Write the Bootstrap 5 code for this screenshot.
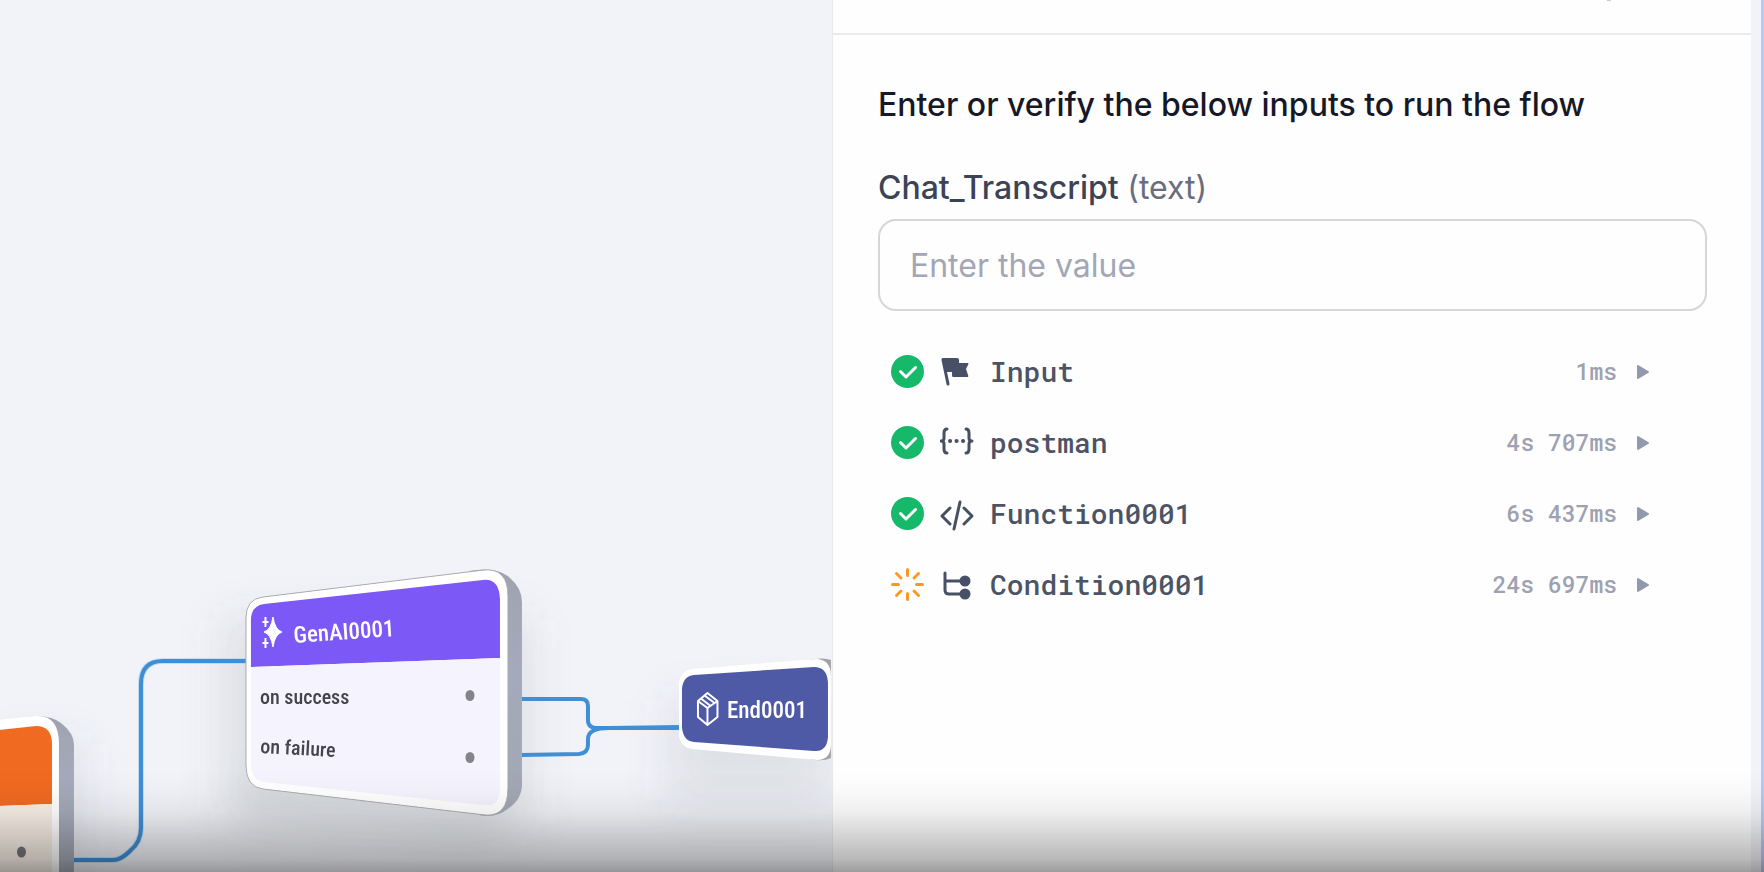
<!DOCTYPE html>
<html lang="en">
<head>
<meta charset="utf-8">
<meta name="viewport" content="width=device-width, initial-scale=1">
<title>Run flow</title>
<link href="https://cdn.jsdelivr.net/npm/bootstrap@5.3.0/dist/css/bootstrap.min.css" rel="stylesheet">
<script src="https://cdn.jsdelivr.net/npm/bootstrap@5.3.0/dist/js/bootstrap.bundle.min.js"></script>
<style>
  body { font-family: Inter, "Liberation Sans", sans-serif; background: #f2f3f8; }
  .flow-canvas { min-width: 0; flex: 1 1 0; }
  .flow-canvas svg { width: 100%; height: 100%; }
  .node-text { font-family: "Roboto Condensed", Roboto, sans-serif; }
  .run-panel { flex: 0 0 52.1%; background: #fefefe; border-left: 1px solid #e9eaee; }
  .panel-top { height: 35px; border-bottom: 2px solid #ebebec; padding-right: 140px; }
  .panel-body { padding: 48px 44px 0 45px; }
  .panel-title { font-size: 32px; line-height: 44px; font-weight: 500; color: #161827; margin-bottom: 39px; }
  .field-label { font-size: 32px; line-height: 44px; color: #3c4354; font-weight: 500; margin-bottom: 9px; }
  .field-label span { color: #6a6d80; font-weight: 400; }
  .value-input { height: 92px; border: 2px solid #d5d6d9; border-radius: 18px; padding: 0 30px; font-size: 32px; background: #fefefe; }
  .value-input::placeholder { color: #a3a6b4; opacity: 1; }
  .run-steps { margin-top: 25px; padding: 0 57px 0 13px; }
  .run-step { height: 71px; font-family: "Roboto Mono", "Liberation Mono", monospace; }
  .step-name { font-size: 28px; color: #4b5365; font-weight: 500; margin-left: 16px; }
  .step-time { font-size: 23px; color: #9da1b1; font-weight: 500; }
  .step-status { margin-right: 16px; }
  .step-toggle { margin-left: 19px; line-height: 0; color: #9399ad; }
  .edge-strip { flex: 0 0 13px; background: #f2f3f8; border-right: 3px solid #b5cafa; }
  .bottom-shade { height: 100px; pointer-events: none; background: linear-gradient(rgba(0,0,0,0), rgba(0,0,0,.02) 20%, rgba(0,0,0,.06) 40%, rgba(0,0,0,.18) 67%, rgba(0,0,0,.27) 87%, rgba(0,0,0,.38)); }
</style>
</head>
<body>
<svg width="0" height="0" class="position-absolute" aria-hidden="true">
  <symbol id="i-check" viewBox="0 0 33 33"><circle cx="16.500" cy="16.500" r="16.500" fill="#16b869"/><path d="M9.500 16.500l5.500 5.500 9.500-9.500" fill="none" stroke="#fff" stroke-width="3" stroke-linecap="round" stroke-linejoin="round"/></symbol>
</svg>
<main class="d-flex vh-100 overflow-hidden">
  <section class="flow-canvas" aria-label="Flow canvas">
    <svg class="d-block" viewBox="0 0 833 872" preserveAspectRatio="xMaxYMax slice">
      <defs>
        <filter id="soft" x="-30%" y="-30%" width="160%" height="160%"><feGaussianBlur stdDeviation="22"/></filter>
        <linearGradient id="side" x1="0" y1="0" x2="0" y2="1"><stop offset="0" stop-color="#9fa3b0"/><stop offset=".4" stop-color="#a5aabb"/><stop offset="1" stop-color="#a2a7b3"/></linearGradient>
      </defs>
      <g filter="url(#soft)" fill="#5c6068">
        <path d="M225 620L530 620V825L225 810Z" opacity=".14"/>
        <path d="M240 785L500 805V840L240 825Z" opacity=".14"/>
        <path d="M0 745H85V880H0Z" opacity=".12"/>
        <path d="M670 700H833V800H670Z" opacity=".12"/>
      </g>
      <path d="M74 860H114Q122 860 131 851Q142 842 142 828V684Q142 661 164 661H248" fill="none" stroke="#a9d2f4" stroke-width="6" opacity=".6"/>
      <g fill="none" stroke="#3f8fd6" stroke-width="4">
        <path d="M74 860H114Q122 860 131 851Q142 842 142 828V684Q142 661 164 661H248"/>
        <path d="M522 699H582Q589 699 589 706V720Q589 728 598 728H682"/>
        <path d="M522 755L580 754Q589 753 589 745V739Q589 728 610 728L682 727"/>
      </g>

      <!-- orange node, running off the left edge -->
      <path d="M30 717Q50 714 62 723Q75 733 75 745V872H30Z" fill="url(#side)"/>
      <path d="M0 720L36 716Q60 714 60 744V872H0Z" fill="#fff"/>
      <path d="M0 730L37 726Q53 726 53 744V804L0 806Z" fill="#f06a22"/>
      <path d="M0 806L53 804V872H0Z" fill="#f8efe6"/>
      <ellipse cx="22.500" cy="852" rx="4.500" ry="5.500" fill="#77737a"/>

      <!-- GenAI node -->
      <path d="M470 571Q497 566 510 577Q523 588 523 602V784Q523 799 510 808Q497 819 480 815Z" fill="url(#side)"/>
      <path d="M264 597L485 570Q509 568 509 596V788Q509 817 486 815L264 789Q247 787 247 765V618Q247 599 264 597Z" fill="#fff" stroke="#a8aab0" stroke-width="1"/>
      <path d="M264 598L485 571Q508 569 508 596V788Q508 816 486 814L264 788Q248 786 248 765V618Q248 600 264 598Z" fill="#fff"/>
      <path d="M265 604L484 580Q500 578 501 599V658L252 667V620Q252 606 265 604Z" fill="#7c59f6"/>
      <path d="M252 667L501 658V790Q500 808 484 805L265 782Q252 780 252 764Z" fill="#f5f3fe"/>
      <path d="M274 617Q276 630 283 632Q276 634 274 647Q272 634 265 632Q272 630 274 617Z" fill="#fff" stroke="#fff" stroke-width="1"/>
      <path d="M266.500 617v10M263.500 622h6M266.500 638v10M263.500 643h6" stroke="#fff" stroke-width="2"/>
      <g class="node-text">
        <text x="295" y="643" font-size="23" font-weight="500" fill="#fff" transform="rotate(-4 295 643)">GenAI0001</text>
        <text x="261" y="704" font-size="20" font-weight="500" fill="#44434f">on success</text>
        <text x="261" y="753" font-size="20" font-weight="500" fill="#44434f" transform="rotate(3 261 753)">on failure</text>
      </g>
      <ellipse cx="471" cy="695.500" rx="4.500" ry="5.500" fill="#83828f"/>
      <ellipse cx="471" cy="757.500" rx="4.500" ry="5.500" fill="#83828f"/>

      <!-- End node -->
      <path d="M810 660Q824 657 832 660V758Q824 762 810 759Z" fill="#a1a2a8"/>
      <path d="M693 669L818 659Q832 660 832 676V744Q832 760 818 760L693 749Q681 747 680 735V684Q681 671 693 669Z" fill="#fff"/>
      <path d="M695 675L815 667Q828 667 829 682V737Q828 752 815 751L695 742Q684 741 683 727V689Q684 676 695 675Z" fill="#4f5aa7"/>
      <path d="M708.500 693L718.500 701V717L708.500 725L699 717V701ZM699 701L708.500 708L718.500 701M708.500 708V725M702 698.500L711 705.500M705.500 695.500L715 702.500" fill="none" stroke="#fff" stroke-width="2" stroke-linejoin="round"/>
      <text class="node-text" x="728" y="718" font-size="23" font-weight="500" fill="#fff">End0001</text>
    </svg>
  </section>

  <aside class="run-panel">
    <div class="panel-top d-flex justify-content-end"><svg width="4" height="1" aria-hidden="true"><path d="M0 0h4v1H0z" fill="#c9cad0"/></svg></div>
    <div class="panel-body">
      <h1 class="panel-title">Enter or verify the below inputs to run the flow</h1>
      <label class="field-label d-block" for="transcript">Chat_Transcript <span>(text)</span></label>
      <input class="form-control value-input" id="transcript" type="text" placeholder="Enter the value">
      <ul class="run-steps list-unstyled mb-0">
        <li class="run-step d-flex align-items-center">
          <svg class="step-status" width="33" height="33"><use href="#i-check"/></svg>
          <svg width="34" height="34" viewBox="0 0 34 34"><path d="M2 5Q1 3 3 3H17Q19 3 19 5V8H28Q29 8 28 10L26 14L28 20Q29 22 27 22H13Q12 22 12 20V17H8L6 17Z" fill="#475067"/><path d="M3 5L8 29" stroke="#475067" stroke-width="3" stroke-linecap="round"/></svg>
          <span class="step-name flex-grow-1">Input</span>
          <span class="step-time">1ms</span>
          <button class="btn p-0 border-0 step-toggle" type="button" aria-label="Expand Input"><svg width="14" height="16"><path d="M2 2V14L12 8Z" fill="currentColor" stroke="currentColor" stroke-width="2" stroke-linejoin="round"/></svg></button>
        </li>
        <li class="run-step d-flex align-items-center">
          <svg class="step-status" width="33" height="33"><use href="#i-check"/></svg>
          <svg width="34" height="34" viewBox="0 0 34 34" fill="none" stroke="#475063" stroke-width="3" stroke-linecap="round" stroke-linejoin="round"><path d="M7 3Q4 3 4 7V12Q4 15 1 15Q4 15 4 18V23Q4 27 7 27M26 3Q29 3 29 7V12Q29 15 32 15Q29 15 29 18V23Q29 27 26 27"/><path d="M10 15h.1M16.500 15h.1M23 15h.1" stroke-width="4"/></svg>
          <span class="step-name flex-grow-1">postman</span>
          <span class="step-time">4s 707ms</span>
          <button class="btn p-0 border-0 step-toggle" type="button" aria-label="Expand postman"><svg width="14" height="16"><path d="M2 2V14L12 8Z" fill="currentColor" stroke="currentColor" stroke-width="2" stroke-linejoin="round"/></svg></button>
        </li>
        <li class="run-step d-flex align-items-center">
          <svg class="step-status" width="33" height="33"><use href="#i-check"/></svg>
          <svg width="34" height="34" viewBox="0 0 34 34" fill="none" stroke="#475063" stroke-width="3" stroke-linecap="round" stroke-linejoin="round"><path d="M10 11L2 19L10 27M24 11L32 19L24 27M20 5L14 32"/></svg>
          <span class="step-name flex-grow-1">Function0001</span>
          <span class="step-time">6s 437ms</span>
          <button class="btn p-0 border-0 step-toggle" type="button" aria-label="Expand Function0001"><svg width="14" height="16"><path d="M2 2V14L12 8Z" fill="currentColor" stroke="currentColor" stroke-width="2" stroke-linejoin="round"/></svg></button>
        </li>
        <li class="run-step d-flex align-items-center">
          <svg class="step-status" width="33" height="33" viewBox="0 0 33 33" stroke="#fb9a23" stroke-width="3" stroke-linecap="round"><path d="M16.500 1.500v6M16.500 25.500v6M1.500 16.500h6M25.500 16.500h6M5.500 5.500l4.500 4.500M23 23l4.500 4.500M27.500 5.500L23 10M10 23l-4.500 4.500"/></svg>
          <svg width="34" height="34" viewBox="0 0 34 34" fill="none" stroke="#475067" stroke-width="3" stroke-linecap="round"><path d="M5 5V22Q5 26 9 26H24M5 13H24"/><circle cx="25" cy="13" r="5.500" fill="#475067" stroke="none"/><circle cx="25" cy="26" r="5.500" fill="#475067" stroke="none"/></svg>
          <span class="step-name flex-grow-1">Condition0001</span>
          <span class="step-time">24s 697ms</span>
          <button class="btn p-0 border-0 step-toggle" type="button" aria-label="Expand Condition0001"><svg width="14" height="16"><path d="M2 2V14L12 8Z" fill="currentColor" stroke="currentColor" stroke-width="2" stroke-linejoin="round"/></svg></button>
        </li>
      </ul>
    </div>
  </aside>
  <div class="edge-strip"></div>
</main>
<div class="bottom-shade fixed-bottom"></div>
</body>
</html>
